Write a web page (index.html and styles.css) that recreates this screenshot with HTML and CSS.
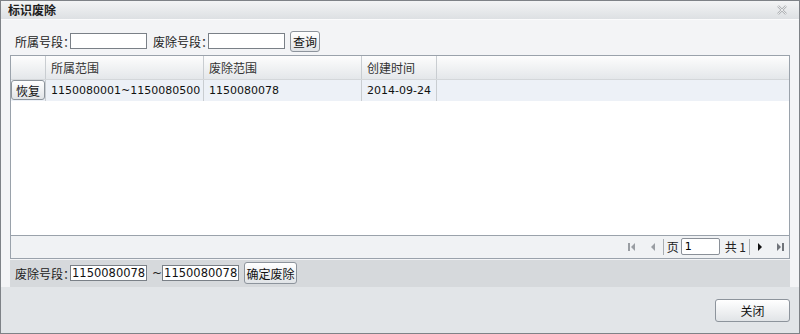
FILE: index.html
```html
<!DOCTYPE html>
<html lang="zh-CN">
<head>
    <meta charset="UTF-8">
    <title>标识废除</title>
    <link rel="stylesheet" href="styles.css">
</head>
<body>
    <div class="window">
        <div class="titlebar">
            <span class="title">标识废除</span>
            <svg class="close-x" width="10" height="10" viewBox="0 0 10 10">
                <path d="M1 1 L9 9 M9 1 L1 9" stroke="#aeb1b4" stroke-width="2.4" fill="none"/>
                <path d="M1 1 L9 9 M9 1 L1 9" stroke="#f1f2f3" stroke-width="0.9" fill="none"/>
            </svg>
        </div>

        <div class="content">
            <div class="search">
                <span class="label">所属号段：</span>
                <input type="text" class="field">
                <span class="label gap">废除号段：</span>
                <input type="text" class="field">
                <button class="btn query">查询</button>
            </div>

            <div class="grid">
                <div class="grid-head">
                    <div class="cell c0"></div>
                    <div class="cell c1">所属范围</div>
                    <div class="cell c2">废除范围</div>
                    <div class="cell c3">创建时间</div>
                    <div class="cell rest"></div>
                </div>
                <div class="grid-body">
                    <div class="row">
                        <div class="cell c0"><button class="btn small">恢复</button></div>
                        <div class="cell c1 num">1150080001~1150080500</div>
                        <div class="cell c2 num">1150080078</div>
                        <div class="cell c3 num">2014-09-24</div>
                        <div class="cell rest"></div>
                    </div>
                </div>
                <div class="pager">
                    <svg class="pg-icon first" width="10" height="10" viewBox="0 0 10 10">
                        <rect x="1" y="1" width="2" height="8" fill="#9a9ea3"/>
                        <path d="M8 1 L4 5 L8 9 Z" fill="#9a9ea3"/>
                    </svg>
                    <svg class="pg-icon prev" width="10" height="10" viewBox="0 0 10 10">
                        <path d="M7 1 L3 5 L7 9 Z" fill="#9a9ea3"/>
                    </svg>
                    <span class="sep s1"></span>
                    <span class="pg-text page">页</span>
                    <input type="text" class="page-field" value="1">
                    <span class="pg-text total">共 1</span>
                    <span class="sep s2"></span>
                    <svg class="pg-icon next" width="10" height="10" viewBox="0 0 10 10">
                        <path d="M3 1 L7 5 L3 9 Z" fill="#111"/>
                    </svg>
                    <svg class="pg-icon last" width="10" height="10" viewBox="0 0 10 10">
                        <path d="M2 1 L6 5 L2 9 Z" fill="#70747a"/>
                        <rect x="7" y="1" width="2" height="8" fill="#70747a"/>
                    </svg>
                </div>
            </div>

            <div class="toolbar">
                <span class="label">废除号段：</span>
                <input type="text" class="field" value="1150080078">
                <span class="tilde">~</span>
                <input type="text" class="field" value="1150080078">
                <button class="btn confirm">确定废除</button>
            </div>
        </div>

        <div class="footer">
            <button class="btn wide">关闭</button>
        </div>
    </div>
</body>
</html>
```

FILE: styles.css
```css
body {
    margin: 0;
    font-family: "Noto Sans CJK SC", "DejaVu Sans", sans-serif;
    font-size: 12px;
    color: #222;
}
.window {
    width: 800px;
    height: 334px;
    box-sizing: border-box;
    border: 1px solid #7e8287;
    display: flex;
    flex-direction: column;
    background: #f3f4f6;
}
.titlebar {
    height: 18px;
    border-bottom: 1px solid #fbfbfc;
    background: linear-gradient(#f3f4f5, #dde0e3);
    display: flex;
    align-items: center;
    justify-content: space-between;
    padding: 0 12px 0 7px;
}
.title {
    font-weight: bold;
    color: #1e1e1e;
}
.close-x {
    margin-top: 1px;
}
.content {
    flex: 1;
    padding: 0 9px;
    display: flex;
    flex-direction: column;
}
.search {
    height: 21px;
    margin-top: 11px;
    padding-left: 5px;
    display: flex;
    align-items: center;
}
.label {
    margin-right: -5px;
}
.label.gap {
    margin-left: 1px;
}
.field {
    width: 77px;
    height: 16px;
    box-sizing: border-box;
    border: 1px solid #7a8087;
    background: #fff;
    padding: 0 1px;
    font-family: "DejaVu Sans", sans-serif;
    font-size: 11.5px;
    color: #111;
    margin: 0 5px 0 0;
}
.btn {
    font-family: "Noto Sans CJK SC", sans-serif;
    font-size: 12px;
    color: #111;
    height: 21px;
    padding: 0;
    border: 1px solid #8d949c;
    border-radius: 3px;
    background: linear-gradient(#ffffff, #e1e4e7);
    line-height: 17px;
}
.btn.query {
    width: 30px;
}
.btn.confirm {
    width: 53px;
    height: 22px;
}
.grid {
    margin-top: 3px;
    height: 202px;
    display: flex;
    flex-direction: column;
    border: 1px solid #9aa2ab;
    background: #fff;
}
.grid-head {
    height: 24px;
    display: flex;
    background: linear-gradient(#fdfdfd, #e4e7ea);
    border-bottom: 1px solid #d4d7da;
    box-sizing: border-box;
}
.cell {
    border-right: 1px solid #c9cdd1;
    padding-left: 5px;
    display: flex;
    align-items: center;
    box-sizing: border-box;
    color: #333;
}
.c0 { width: 35px; padding-left: 0; }
.c1 { width: 158px; }
.c2 { width: 158px; }
.c3 { width: 75px; }
.rest { flex: 1; border-right: none; }
.grid-body {
    flex: 1;
}
.row {
    height: 21px;
    display: flex;
    background: #edf1f7;
}
.num {
    font-family: "DejaVu Sans", sans-serif;
    font-size: 11px;
    color: #111;
}
.btn.small {
    height: 20px;
    width: 34px;
}
.pager {
    height: 22px;
    background: #f0f2f4;
    border-top: 1px solid #9aa2ab;
    display: flex;
    align-items: center;
    justify-content: flex-end;
    padding-right: 4px;
}
.prev { margin-left: 11px; }
.s1 { margin-left: 5px; }
.page { margin-left: 3px; }
.page-field { margin-left: 2px; }
.total { margin-left: 5px; }
.s2 { margin-left: 3px; }
.next { margin-left: 5px; }
.last { margin-left: 10px; }
.sep {
    width: 1px;
    height: 16px;
    background: #a9aeb3;
}
.page-field {
    width: 39px;
    height: 17px;
    box-sizing: border-box;
    border: 1px solid #8a9098;
    border-radius: 2px;
    font-family: "DejaVu Sans", sans-serif;
    font-size: 11px;
    padding: 0 3px;
}
.toolbar {
    height: 27px;
    margin-top: 1px;
    background: #d6d9dc;
    display: flex;
    align-items: center;
    padding-left: 5px;
}
.tilde {
    font-family: "DejaVu Sans", sans-serif;
}
.footer {
    height: 47px;
    background: #e2e5e8;
    display: flex;
    justify-content: flex-end;
    align-items: flex-start;
    padding: 12px 9px 0 0;
    box-sizing: border-box;
}
.btn.wide {
    width: 75px;
    height: 23px;
}
```
